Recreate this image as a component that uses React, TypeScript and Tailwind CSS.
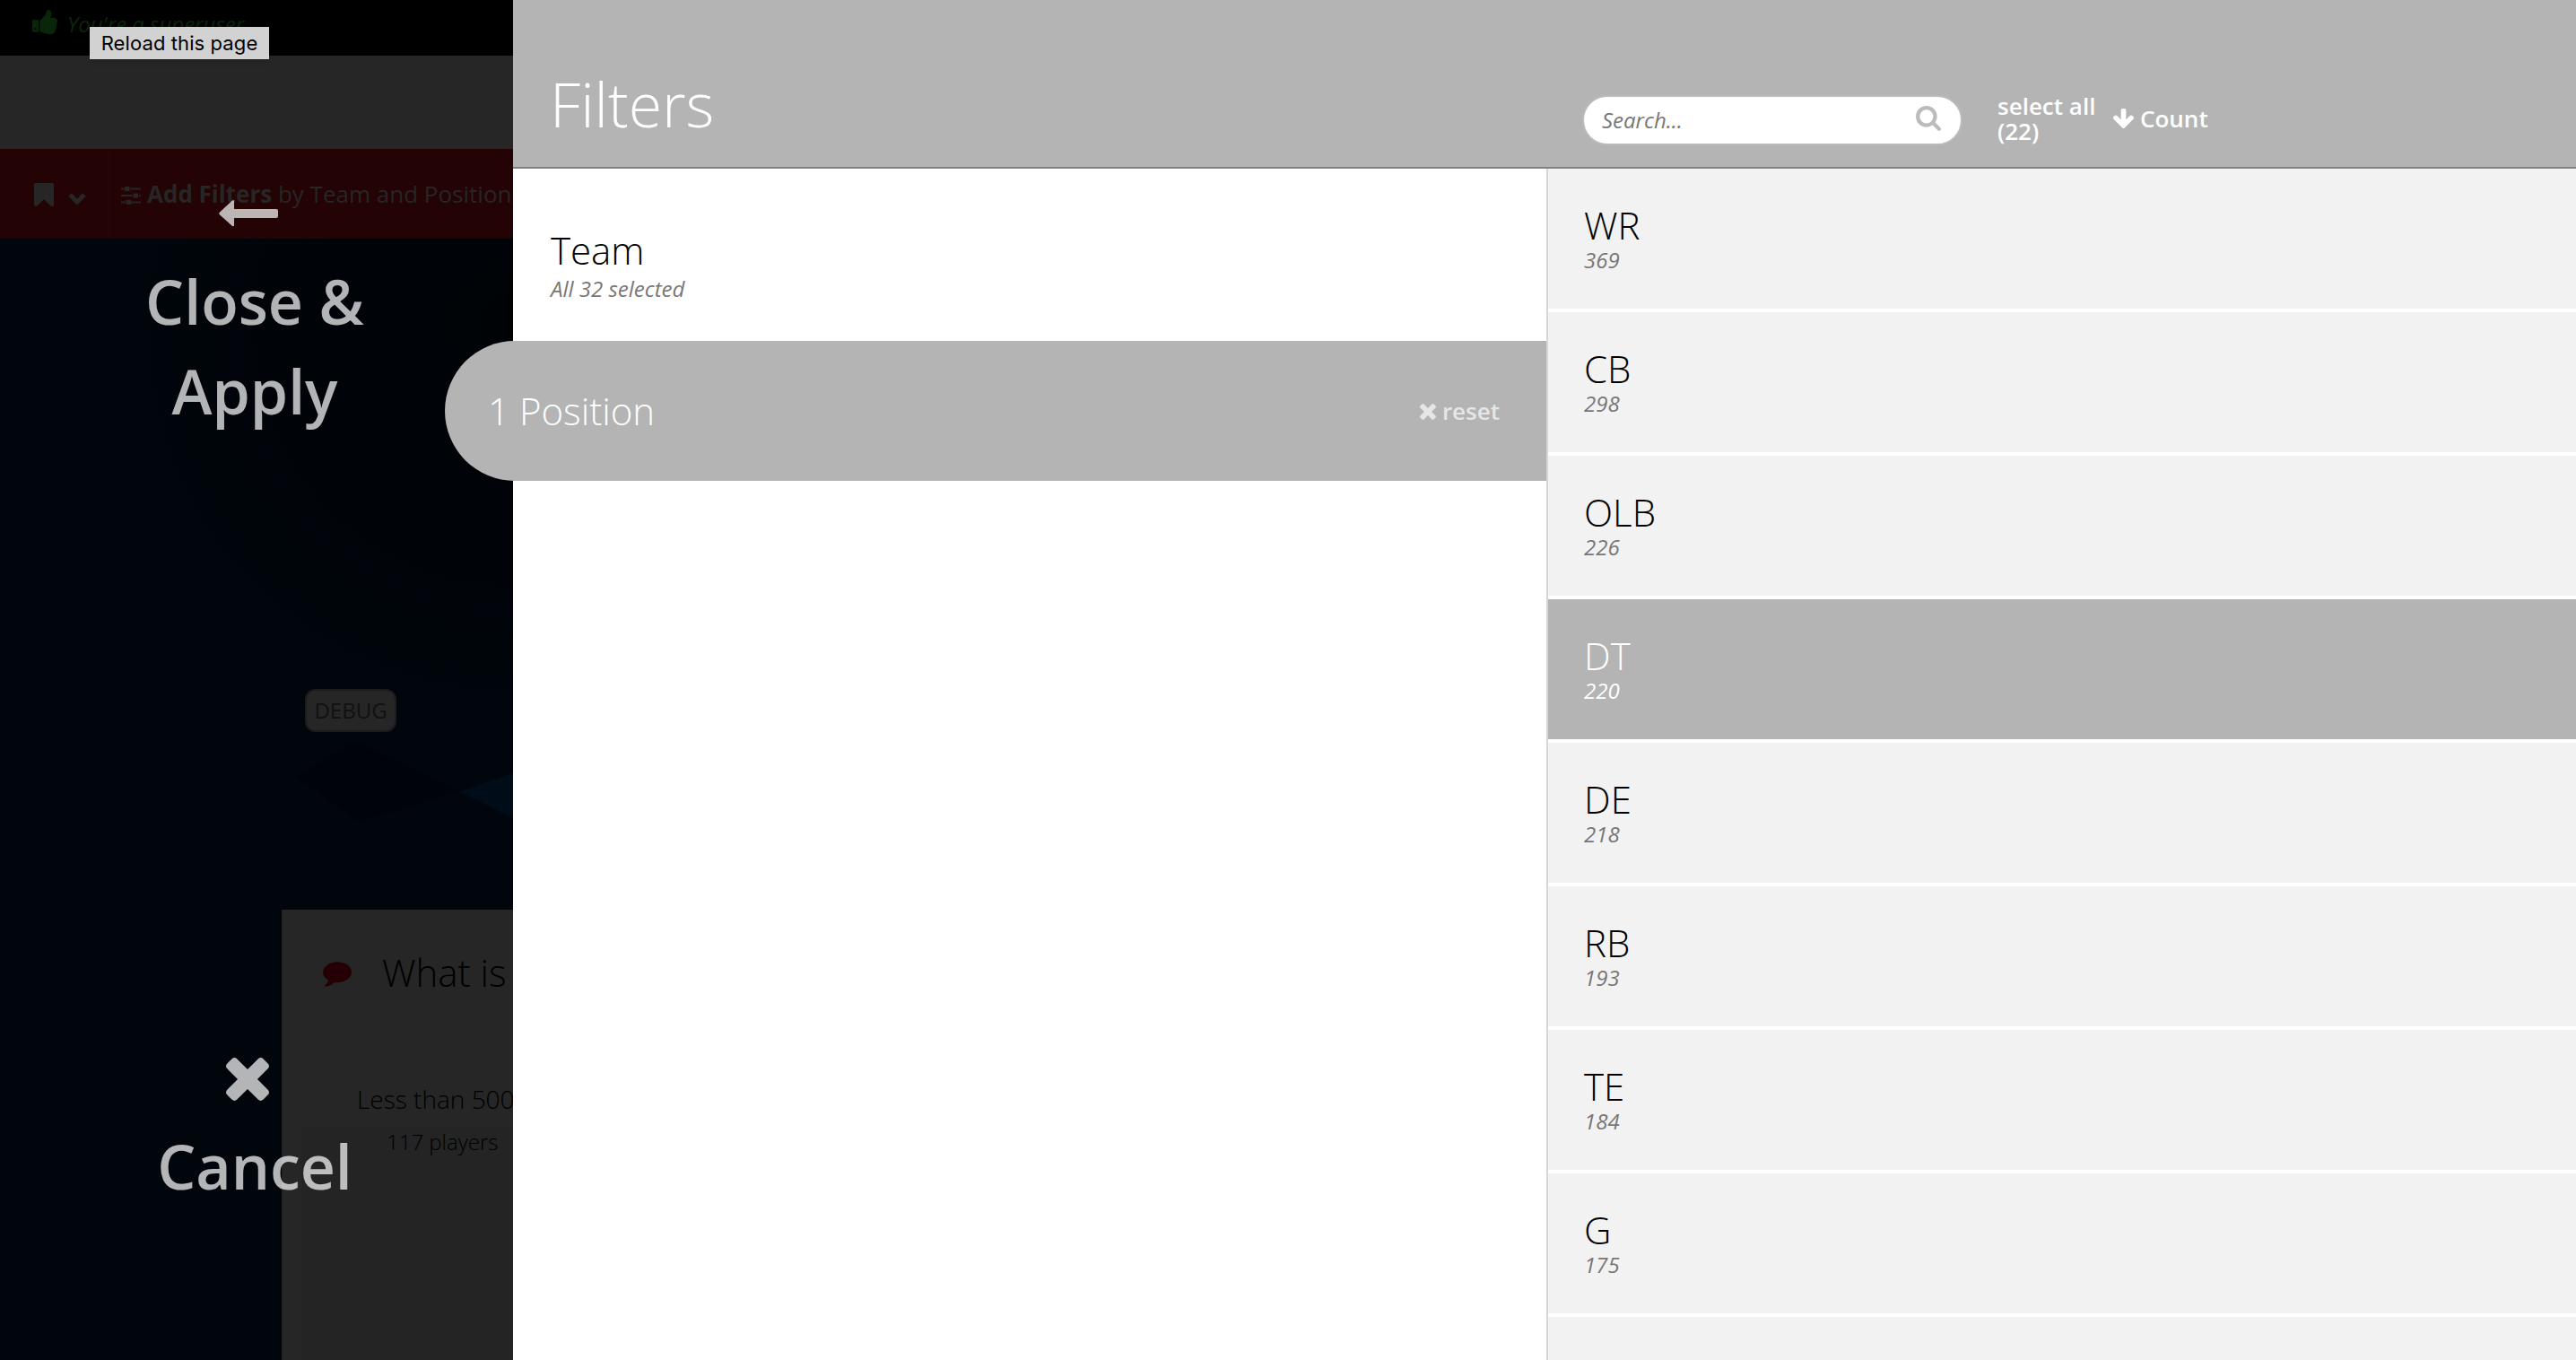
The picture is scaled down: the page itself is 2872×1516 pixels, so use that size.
import { useState } from "react";

type Position = { name: string; count: number };

const positions: Position[] = [
  { name: "WR", count: 369 },
  { name: "CB", count: 298 },
  { name: "OLB", count: 226 },
  { name: "DT", count: 220 },
  { name: "DE", count: 218 },
  { name: "RB", count: 193 },
  { name: "TE", count: 184 },
  { name: "G", count: 175 },
];

const icons = {
  times: {
    box: "302 366 1188 1188",
    d: "M1490 1322q0 40-28 68l-136 136q-28 28-68 28t-68-28l-294-294-294 294q-28 28-68 28t-68-28l-136-136q-28-28-28-68t28-68l294-294-294-294q-28-28-28-68t28-68l136-136q28-28 68-28t68 28l294 294 294-294q28-28 68-28t68 28l136 136q28 28 28 68t-28 68l-294 294 294 294q28 28 28 68z",
  },
  search: {
    box: "64 128 1664 1664",
    d: "M1216 832q0-185-131.5-316.5t-316.5-131.5-316.5 131.5-131.5 316.5 131.5 316.5 316.5 131.5 316.5-131.5 131.5-316.5zm512 832q0 52-38 90t-90 38q-54 0-90-38l-343-342q-179 124-399 124-143 0-273.5-55.5t-225-150-150-225-55.5-273.5 55.5-273.5 150-225 225-150 273.5-55.5 273.5 55.5 225 150 150 225 55.5 273.5q0 220-124 399l343 343q37 37 37 90z",
  },
  arrowDown: {
    box: "117 128 1558 1483",
    d: "M1675 832q0 53-37 90l-651 652q-39 37-91 37-53 0-90-37l-651-652q-38-36-38-90 0-53 38-91l74-75q39-37 91-37 53 0 90 37l294 294v-704q0-52 38-90t90-38h128q52 0 90 38t38 90v704l294-294q37-37 90-37 52 0 91 37l75 75q37 39 37 91z",
  },
  thumbsUp: {
    box: "64 128 1600 1536",
    d: "M320 1344q0-26-19-45t-45-19q-27 0-45.5 19t-18.5 45q0 27 18.5 45.5t45.5 18.5q26 0 45-18.5t19-45.5zm160-512v640q0 26-19 45t-45 19h-288q-26 0-45-19t-19-45v-640q0-26 19-45t45-19h288q26 0 45 19t19 45zm1184 0q0 86-55 149 15 44 15 76 3 76-43 137 17 56 0 117-15 57-54 94 9 112-49 181-64 76-197 78h-129q-66 0-144-15.5t-121.5-29-120.5-39.5q-123-43-158-44-26-1-45-19.5t-19-44.5v-641q0-25 18-43.5t43-20.5q24-2 76-59t101-121q68-87 101-120 18-18 31-48t17.5-48.5 13.5-60.5q7-39 12.5-61t19.5-52 34-50q19-19 45-19 46 0 82.5 10.5t60 26 40 40.5 24 45 12 50 5 45 .5 39q0 38-9.5 76t-19 60-27.5 56q-3 6-10 18t-11 22-8 24h277q78 0 135 57t57 135z",
  },
  bookmark: {
    box: "256 128 1280 1512",
    d: "M1420 128q23 0 44 9 33 13 52.5 41t19.5 62v1289q0 34-19.5 62t-52.5 41q-19 8-44 8-48 0-83-32l-441-424-441 424q-36 33-83 33-23 0-44-9-33-13-52.5-41t-19.5-62v-1289q0-34 19.5-62t52.5-41q21-9 44-9h1048z",
  },
  comment: {
    box: "0 256 1792 1536",
    d: "M1792 896q0 174-120 321.5t-326 233-450 85.5q-70 0-145-8-198 175-460 242-49 14-114 22-17 2-30.5-9t-17.5-29v-1q-3-4-.5-12t2-10 4.5-9.5l6-9 7-8.5 8-9q7-8 31-34.5t34.5-38 31-39.5 32.5-51 27-59 26-76q-157-89-247.5-220t-90.5-281q0-130 71-248.5t191-204.5 286-136.5 348-50.5q244 0 450 85.5t326 233 120 321.5z",
  },
};

function Icon({ name, className }: { name: keyof typeof icons; className: string }) {
  return (
    <svg viewBox={icons[name].box} className={className} fill="currentColor" aria-hidden="true">
      <path d={icons[name].d} />
    </svg>
  );
}

function SlidersIcon() {
  return (
    <svg viewBox="0 0 22 22" className="w-[22px] h-[22px]" fill="currentColor" aria-hidden="true">
      <path d="M0 1.500h3.500v2H0zM10.500 1.500H22v2H10.500zM4 0h5.500v5H4zM0 9h12.500v2H0zM20 9h2v2h-2zM13.500 7.500h5.500v5h-5.500zM0 16.500h5v2H0zM12 16.500h10v2H12zM5.500 15h6v5h-6z" />
    </svg>
  );
}

// The dimmed page that stays visible beside the drawer
function DimmedPage() {
  return (
    <div className="h-full flex flex-col whitespace-nowrap text-2xl text-[#262626]">
      <div className="h-[62px] shrink-0 bg-black flex items-start text-[#0a260a]">
        <Icon name="thumbsUp" className="w-[28px] h-[27px] ml-9 mt-[11px]" />
        <span className="ml-[11px] mt-[13px] leading-[28px] italic">You're a superuser</span>
      </div>
      <div className="h-[104px] shrink-0 bg-[#262626]" />
      <div className="h-[100px] shrink-0 bg-[#240305] flex">
        <div className="w-[122px] shrink-0 border-r border-[#260709] flex items-start">
          <Icon name="bookmark" className="w-[22px] h-[26px] ml-[38px] mt-[38px]" />
          <svg viewBox="0 0 20 14" className="w-[20px] h-[14px] ml-4 mt-[48px]" aria-hidden="true">
            <path d="M2 3l8 8 8-8" fill="none" stroke="currentColor" strokeWidth="5" />
          </svg>
        </div>
        <div className="flex items-start pl-[13px]">
          <div className="pt-[42px]">
            <SlidersIcon />
          </div>
          <p className="ml-[7px] mt-[36px] text-[26px] leading-[28px]">
            <b className="font-bold">Add Filters</b> by Team and Position
          </p>
        </div>
      </div>
      <div className="relative flex-1 flex flex-col bg-[#00060c]">
        <svg viewBox="0 0 572 1250" className="absolute inset-0 w-full h-full" aria-hidden="true">
          <defs>
            <radialGradient id="shade" gradientUnits="userSpaceOnUse" cx="572" cy="100" r="460">
              <stop offset="0" stopColor="#000306" />
              <stop offset="0.5" stopColor="#000409" />
              <stop offset="1" stopColor="#00060c" />
            </radialGradient>
          </defs>
          <rect width="572" height="560" fill="url(#shade)" />
          <path d="M395 560L512 616L400 650L330 600z" fill="#00040a" />
          <path d="M512 616L572 596V646z" fill="#010c19" />
        </svg>
        <div className="relative mt-[502px] ml-[340px] w-[102px] h-[48px] rounded-xl border-2 border-[#1c1c1c] bg-[#262626] text-[#111] text-center leading-[43px]">
          DEBUG
        </div>
        <div className="relative mt-[198px] ml-[314px] flex-1 bg-[#262626] border-l border-[#222] text-black font-light overflow-hidden">
          <div className="flex items-start pt-8 pl-[21px] h-[242px] flex-wrap content-start">
            <div className="w-[76px] h-[76px] rounded-full border border-[#252525] flex items-center justify-center text-[#240004]">
              <Icon name="comment" className="w-[32px] h-[28px] mt-1 ml-1" />
            </div>
            <h2 className="ml-3.5 mt-[17px] text-[42px] leading-[42px]">What is</h2>
            <p className="ml-[62px] mt-[89px] w-full text-[28px] leading-[28px]">Less than 500</p>
          </div>
          <div className="ml-[21px] h-full bg-[#242424]">
            <p className="ml-[95px] pt-[3px] leading-[28px]">117 players</p>
          </div>
        </div>
      </div>
    </div>
  );
}

function OverlayActions() {
  return (
    <div className="absolute inset-0 flex flex-col items-center pt-[223px] pr-[4px] text-white opacity-70 text-[68px] leading-[100px] font-semibold text-center">
      <button className="flex flex-col items-center">
        <svg viewBox="0 0 66 30" className="w-[66px] h-[30px] mr-3.5" fill="currentColor" aria-hidden="true">
          <path d="M17 1.500V10h47q2 0 2 2v6q0 2-2 2H17v8q0 2-2 1L.8 16.200q-1-1.200 0-2.400L15 .5q2-.8 2 1z" />
        </svg>
        <span className="w-[300px] mt-[33px]">Close &amp; Apply</span>
      </button>
      <button className="mt-[693px] flex flex-col items-center">
        <Icon name="times" className="w-[48px] h-[48px] mr-[17px]" />
        <span className="mt-[23px]">Cancel</span>
      </button>
    </div>
  );
}

export default function App() {
  const [selected, setSelected] = useState("DT");

  return (
    <div className="relative flex w-[2872px] h-[1516px] overflow-hidden bg-white font-['Open_Sans',sans-serif] text-2xl">
      <aside className="relative w-[572px] shrink-0 overflow-hidden">
        <DimmedPage />
        <OverlayActions />
      </aside>

      <section className="flex-1 flex flex-col">
        <header className="h-[188px] shrink-0 bg-[#b4b4b4] border-b-2 border-[#808080] flex text-white">
          <h1 className="w-[1192px] pl-[41px] pt-[81px] text-[68px] leading-[70px] font-light">Filters</h1>
          <div className="flex items-start font-semibold text-[26px] leading-[28px]">
            <label className="w-[424px] h-[56px] mt-[106px] rounded-full bg-white border-2 border-[#bbb] flex items-center justify-between pl-5 pr-[22px]">
              <input
                placeholder="Search..."
                className="w-[300px] h-[40px] -mt-px text-2xl font-normal italic text-[#777] placeholder:text-[#777] outline-none"
              />
              <Icon name="search" className="w-[28px] h-[28px] -mt-1 text-[#bbb]" />
            </label>
            <button className="w-[120px] mt-[104px] ml-[39px] text-left">select all (22)</button>
            <button className="flex items-start mt-[118px] ml-[9px]">
              <Icon name="arrowDown" className="w-[23px] h-[22px] mt-[3px]" />
              <span className="ml-[7px]">Count</span>
            </button>
          </div>
        </header>

        <div className="flex-1 flex min-h-0">
          <div className="w-[1154px] shrink-0 border-r-2 border-[#d6d6d6]">
            <div className="h-[192px] pl-[42px] pt-[70px]">
              <h2 className="text-[42px] leading-[42px] font-light">Team</h2>
              <p className="mt-[8px] leading-[28px] italic text-[#777]">All 32 selected</p>
            </div>
            <div className="relative -ml-[76px] h-[156px] rounded-l-full bg-[#b4b4b4] text-white flex items-center justify-between pl-12 pr-[52px]">
              <h2 className="text-[42px] leading-[42px] font-light">1 Position</h2>
              <button className="flex items-center font-semibold text-[26px] leading-[28px] text-[#e6e6e6]">
                <Icon name="times" className="w-[18px] h-[18px] mt-0.5" />
                <span className="ml-[7px]">reset</span>
              </button>
            </div>
          </div>

          <ul className="flex-1 flex flex-col gap-1 overflow-hidden">
            {positions.map((p) => (
              <li
                key={p.name}
                onClick={() => setSelected(p.name)}
                className={`h-[156px] shrink-0 pl-10 pt-[42px] ${
                  p.name === selected ? "bg-[#b4b4b4] text-white" : "bg-[#f2f2f2] text-black"
                }`}
              >
                <h3 className="text-[42px] leading-[42px] font-light">{p.name}</h3>
                <p
                  className={`mt-[4px] leading-[28px] italic ${
                    p.name === selected ? "text-white" : "text-[#777]"
                  }`}
                >
                  {p.count}
                </p>
              </li>
            ))}
            <li className="flex-1 bg-[#f2f2f2]" />
          </ul>
        </div>
      </section>

      <div className="absolute left-[100px] top-[30px] w-[200px] h-[36px] bg-[#d2d2d2] shadow-md text-black text-center text-[22px] leading-[36px] tracking-[0.1px] font-['Inter',sans-serif]">
        Reload this page
      </div>
    </div>
  );
}
